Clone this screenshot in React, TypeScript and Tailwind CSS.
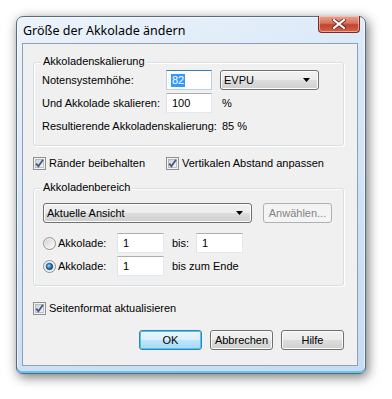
import React from "react";

const F = { fontFamily: '"Liberation Sans", Arial, sans-serif' };

function CheckBox() {
  return (
    <svg width="13" height="13" viewBox="0 0 13 13" className="shrink-0">
      <defs>
        <linearGradient id="cbg" x1="0" y1="0" x2="1" y2="1">
          <stop offset="0" stopColor="#cfcfcf" />
          <stop offset="1" stopColor="#f8f8f8" />
        </linearGradient>
      </defs>
      <rect x="0.5" y="0.5" width="12" height="12" fill="#f4f4f4" stroke="#8e8f8f" />
      <rect x="2.5" y="2.5" width="8" height="8" fill="url(#cbg)" stroke="#b0b0b0" strokeWidth="0.8" />
      <path d="M3.2 6.6 L5.4 9.2 L10 2.8" fill="none" stroke="#3d5a8f" strokeWidth="1.8" />
    </svg>
  );
}

function Radio({ checked }: { checked?: boolean }) {
  return (
    <svg width="13" height="13" viewBox="0 0 13 13" className="shrink-0">
      <defs>
        <linearGradient id="rbg" x1="0" y1="0" x2="1" y2="1">
          <stop offset="0" stopColor="#d2d2d2" />
          <stop offset="1" stopColor="#fcfcfc" />
        </linearGradient>
        <radialGradient id="rdot" cx="0.4" cy="0.4" r="0.6">
          <stop offset="0" stopColor="#9ee0fb" />
          <stop offset="0.5" stopColor="#2c8bc7" />
          <stop offset="1" stopColor="#0e3d66" />
        </radialGradient>
      </defs>
      <circle cx="6.5" cy="6.5" r="6" fill="#f3f3f3" stroke="#8e8f8f" />
      <circle cx="6.5" cy="6.5" r="4.5" fill="url(#rbg)" />
      {checked && <circle cx="6.5" cy="6.5" r="3.3" fill="url(#rdot)" stroke="#1a4870" strokeWidth="0.6" />}
    </svg>
  );
}

function TextBox({ value, w, focused, selected }: { value: string; w: string; focused?: boolean; selected?: boolean }) {
  return (
    <div
      className={`${w} h-[20px] bg-white flex items-center pl-[4px] border ${
        focused
          ? "border-[#b4d3eb] border-t-[#3d7bad]"
          : "border-[#e3e9ef] border-t-[#abadb3] border-l-[#e2e3ea]"
      }`}
    >
      {selected ? (
        <span className="bg-[#3399ff] text-white leading-[13px] px-[1px]">{value}</span>
      ) : (
        <span className="leading-[13px] px-[1px]">{value}</span>
      )}
    </div>
  );
}

function Combo({ label, w }: { label: string; w: string }) {
  return (
    <div className={`${w} h-[20px] rounded-[3px] border border-[#707070] bg-[linear-gradient(180deg,#f2f2f2_0%,#ebebeb_50%,#dddddd_51%,#cfcfcf_100%)] flex items-center justify-between pl-[3px] pr-[8px] shadow-[inset_0_0_0_1px_#fcfcfc]`}>
      <span className="leading-[13px]">{label}</span>
      <svg width="7" height="4" viewBox="0 0 7 4">
        <path d="M0 0 H7 L3.5 4 Z" fill="#000" />
      </svg>
    </div>
  );
}

function Button({ label, def, disabled, w }: { label: string; def?: boolean; disabled?: boolean; w: string }) {
  let cls = "";
  if (def) {
    cls = "border-[#3c7fb1] bg-[linear-gradient(180deg,#eaf6fd_0%,#d9f0fc_50%,#bee6fd_51%,#a7d9f5_100%)] shadow-[inset_0_0_0_1px_#48c7f4]";
  } else if (disabled) {
    cls = "border-[#adb2b5] bg-[#f4f4f4] text-[#838383]";
  } else {
    cls = "border-[#707070] bg-[linear-gradient(180deg,#f2f2f2_0%,#ebebeb_50%,#dddddd_51%,#cfcfcf_100%)] shadow-[inset_0_0_0_1px_#fcfcfc]";
  }
  return (
    <div className={`${w} h-[20px] rounded-[3px] border ${cls} flex items-center justify-center`}>
      <span className="leading-[13px]">{label}</span>
    </div>
  );
}

function Group({ title, children, className }: { title: string; children: React.ReactNode; className: string }) {
  return (
    <div className={`relative rounded-[3px] border border-[#d5dfe5] shadow-[inset_1px_1px_0_#fff,1px_1px_0_#fff] ${className}`}>
      <span className="absolute -top-[8px] left-[7px] bg-[#f0f0f0] px-[2px] leading-[13px]">{title}</span>
      {children}
    </div>
  );
}

export default function App() {
  return (
    <div className="w-[392px] h-[399px] bg-white pl-[16px] pt-[16px] text-[11px] text-black" style={F}>
      <div className="w-[350px] h-[358px] rounded-t-[7px] rounded-b-[6px] border border-[#5c6b7b] bg-[linear-gradient(160deg,#edf3fb_0%,#d6e6f7_40%,#c6dcf2_100%)] shadow-[2px_3px_12px_rgba(0,0,0,0.55),inset_0_-2px_0_#6cc3ee,inset_0_0_0_1px_rgba(255,255,255,0.6)] flex flex-col">
        <div className="h-[26px] flex justify-between items-start pl-[6px] pr-[5px]">
          <span className="mt-[6px] text-[12.5px] leading-[15px] text-black" style={{ fontFamily: '"Noto Sans", "Open Sans", sans-serif' }}>
            Größe der Akkolade ändern
          </span>
          <div className="w-[42px] h-[17px] -mt-px rounded-b-[4px] border border-[#7a2a22] border-t-0 bg-[linear-gradient(180deg,#e8a493_0%,#d6725f_45%,#c4432b_55%,#d0634a_100%)] flex items-center justify-center shadow-[inset_0_0_0_1px_rgba(255,210,200,0.6)]">
            <svg width="14" height="10" viewBox="0 0 14 10">
              <path d="M2 1 L12 9 M12 1 L2 9" stroke="#5a1a12" strokeWidth="3.6" strokeLinecap="square" />
              <path d="M2 1 L12 9 M12 1 L2 9" stroke="#ffffff" strokeWidth="2.2" strokeLinecap="square" />
            </svg>
          </div>
        </div>
        <div className="ml-[5px] w-[336px] h-[323px] border border-[#8da0b4] bg-[#f0f0f0] flex flex-col pl-[10px] pr-[12px] pt-[18px]">
          <Group title="Akkoladenskalierung" className="w-[311px] h-[84px] pt-[7px] pl-[8px]">
            <div className="flex items-center">
              <span className="w-[124px]">Notensystemhöhe:</span>
              <TextBox value="82" w="w-[46px]" focused selected />
              <div className="ml-[8px]">
                <Combo label="EVPU" w="w-[99px]" />
              </div>
            </div>
            <div className="flex items-center mt-[3px]">
              <span className="w-[124px]">Und Akkolade skalieren:</span>
              <TextBox value="100" w="w-[46px]" />
              <span className="ml-[10px]">%</span>
            </div>
            <div className="flex items-center mt-[7px] leading-[13px]">
              <span className="w-[180px]">Resultierende Akkoladenskalierung:</span>
              <span>85 %</span>
            </div>
          </Group>

          <div className="flex items-center mt-[11px] h-[13px]">
            <div className="w-[133px] flex items-center gap-[3px]">
              <CheckBox />
              <span className="leading-[13px]">Ränder beibehalten</span>
            </div>
            <div className="flex items-center gap-[3px]">
              <CheckBox />
              <span className="leading-[13px]">Vertikalen Abstand anpassen</span>
            </div>
          </div>

          <Group title="Akkoladenbereich" className="mt-[18px] w-[311px] h-[98px] pt-[14px] pl-[9px]">
            <div className="flex items-center">
              <Combo label="Aktuelle Ansicht" w="w-[209px]" />
              <div className="ml-[11px]">
                <Button label="Anwählen..." disabled w="w-[69px]" />
              </div>
            </div>
            <div className="flex items-center mt-[10px]">
              <div className="w-[74px] flex items-center gap-[2px]">
                <Radio />
                <span className="leading-[13px]">Akkolade:</span>
              </div>
              <TextBox value="1" w="w-[47px]" />
              <span className="ml-[8px] w-[24px]">bis:</span>
              <TextBox value="1" w="w-[47px]" />
            </div>
            <div className="flex items-center mt-[3px]">
              <div className="w-[74px] flex items-center gap-[2px]">
                <Radio checked />
                <span className="leading-[13px]">Akkolade:</span>
              </div>
              <TextBox value="1" w="w-[47px]" />
              <span className="ml-[8px]">bis zum Ende</span>
            </div>
          </Group>

          <div className="flex items-center gap-[3px] mt-[16px] h-[13px]">
            <CheckBox />
            <span className="leading-[13px]">Seitenformat aktualisieren</span>
          </div>

          <div className="flex justify-end gap-[8px] mt-[15px] pr-[1px]">
            <Button label="OK" def w="w-[63px]" />
            <Button label="Abbrechen" w="w-[63px]" />
            <Button label="Hilfe" w="w-[63px]" />
          </div>
        </div>
      </div>
    </div>
  );
}
